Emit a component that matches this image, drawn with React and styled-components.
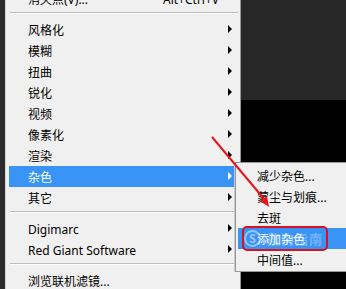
import React from "react";
import styled, { createGlobalStyle } from "styled-components";

const GlobalStyle = createGlobalStyle`
  html, body { margin: 0; padding: 0; background: #000; }
  body { font-family: "Noto Sans", "Noto Sans CJK SC", sans-serif; }
  * { box-sizing: border-box; }
`;

const Stage = styled.div`
  position: relative;
  width: 346px;
  height: 289px;
  overflow: hidden;
  display: flex;
  align-items: flex-start;
  background: linear-gradient(#272727 0, #272727 100px, #000 100px, #000 100%);
`;

const LeftStrip = styled.div`
  width: 5px;
  align-self: stretch;
  background: #2b2b2b;
`;

const Menu = styled.div`
  width: 236px;
  margin-top: -15px;
  padding: 2px 4px 2px 3px;
  background: #f0f0f0;
  border: 1px solid #979797;
  border-left-color: #d8d8d8;
  display: flex;
  flex-direction: column;
  flex-shrink: 0;
`;

const Item = styled.div`
  position: relative;
  height: 21px;
  display: flex;
  align-items: center;
  padding: 0 4px 0 19px;
  font-size: 12px;
  line-height: 21px;
  color: ${(p) => (p.$active ? "#fff" : "#000")};
  background: ${(p) => (p.$active ? "#3a94f6" : "transparent")};
  white-space: nowrap;
`;

const Label = styled.span`
  flex: 1;
  padding-top: 1px;
`;

const Shortcut = styled.span`
  padding-right: 13px;
  padding-top: 1px;
`;

const Arrow = styled.span`
  width: 0;
  height: 0;
  border-left: 4px solid ${(p) => (p.$active ? "#fff" : "#000")};
  border-top: 4px solid transparent;
  border-bottom: 4px solid transparent;
  margin-top: -1px;
`;

const Separator = styled.div`
  height: 10px;
  padding-top: 3px;
  margin: 0 -2px 0 1px;
  &::before {
    content: "";
    display: block;
    height: 1px;
    background: #bdbdbd;
  }
  &::after {
    content: "";
    display: block;
    height: 1px;
    background: #fcfcfc;
  }
`;

const SubMenu = styled.div`
  position: absolute;
  left: 235px;
  top: 162px;
  width: 125px;
  padding: 2px 0 1px 2px;
  background: #f0f0f0;
  border: 1px solid #979797;
  box-shadow: -1px 0 0 #c8c8c8;
  display: flex;
  flex-direction: column;
`;

const Annotation = styled.svg`
  position: absolute;
  left: 0;
  top: 0;
  pointer-events: none;
`;

const Watermark = styled.div`
  position: absolute;
  left: 244px;
  top: 229px;
  display: flex;
  align-items: center;
  gap: 2px;
  pointer-events: none;
  color: rgba(255, 255, 255, 0.3);
  font-family: "Noto Sans CJK SC", sans-serif;
  font-size: 13px;
  font-weight: 700;
`;

const WmLogo = styled.span`
  width: 17px;
  height: 17px;
  border-radius: 50%;
  border: 2px solid rgba(255, 255, 255, 0.45);
  display: flex;
  align-items: center;
  justify-content: center;
  font-size: 11px;
  line-height: 1;
  color: rgba(255, 255, 255, 0.5);
`;

const WmText = styled.span`
  margin-left: 4px;
  letter-spacing: 1px;
`;

const mainItems = [
  { type: "item", label: "消失点(V)...", shortcut: "Alt+Ctrl+V" },
  { type: "sep" },
  { type: "item", label: "风格化", sub: true },
  { type: "item", label: "模糊", sub: true },
  { type: "item", label: "扭曲", sub: true },
  { type: "item", label: "锐化", sub: true },
  { type: "item", label: "视频", sub: true },
  { type: "item", label: "像素化", sub: true },
  { type: "item", label: "渲染", sub: true },
  { type: "item", label: "杂色", sub: true, active: true },
  { type: "item", label: "其它", sub: true },
  { type: "sep" },
  { type: "item", label: "Digimarc", sub: true },
  { type: "item", label: "Red Giant Software", sub: true },
  { type: "sep" },
  { type: "item", label: "浏览联机滤镜..." },
];

const subItems = [
  { label: "减少杂色..." },
  { label: "蒙尘与划痕..." },
  { label: "去斑" },
  { label: "添加杂色", active: true },
  { label: "中间值..." },
];

export default function App() {
  return (
    <>
      <GlobalStyle />
      <Stage>
        <LeftStrip />
        <Menu>
          {mainItems.map((it, i) =>
            it.type === "sep" ? (
              <Separator key={i} />
            ) : (
              <Item key={i} $active={it.active}>
                <Label>{it.label}</Label>
                {it.shortcut && <Shortcut>{it.shortcut}</Shortcut>}
                {it.sub && <Arrow $active={it.active} />}
              </Item>
            )
          )}
        </Menu>
        <SubMenu>
          {subItems.map((it, i) => (
            <Item key={i} $active={it.active}>
              <Label>{it.label}</Label>
            </Item>
          ))}
        </SubMenu>
        <Watermark>
          <WmLogo>S</WmLogo>
          <WmText>搜狗指南</WmText>
        </Watermark>
        <Annotation width="346" height="289" viewBox="0 0 346 289">
          <line x1="212" y1="137" x2="265" y2="200" stroke="#e4161c" strokeWidth="2" />
          <polygon points="269,207 260,201 267,196" fill="#e4161c" />
          <rect x="243" y="227" width="84" height="23" rx="4" ry="4" fill="none" stroke="#d9121c" strokeWidth="2" />
        </Annotation>
      </Stage>
    </>
  );
}
